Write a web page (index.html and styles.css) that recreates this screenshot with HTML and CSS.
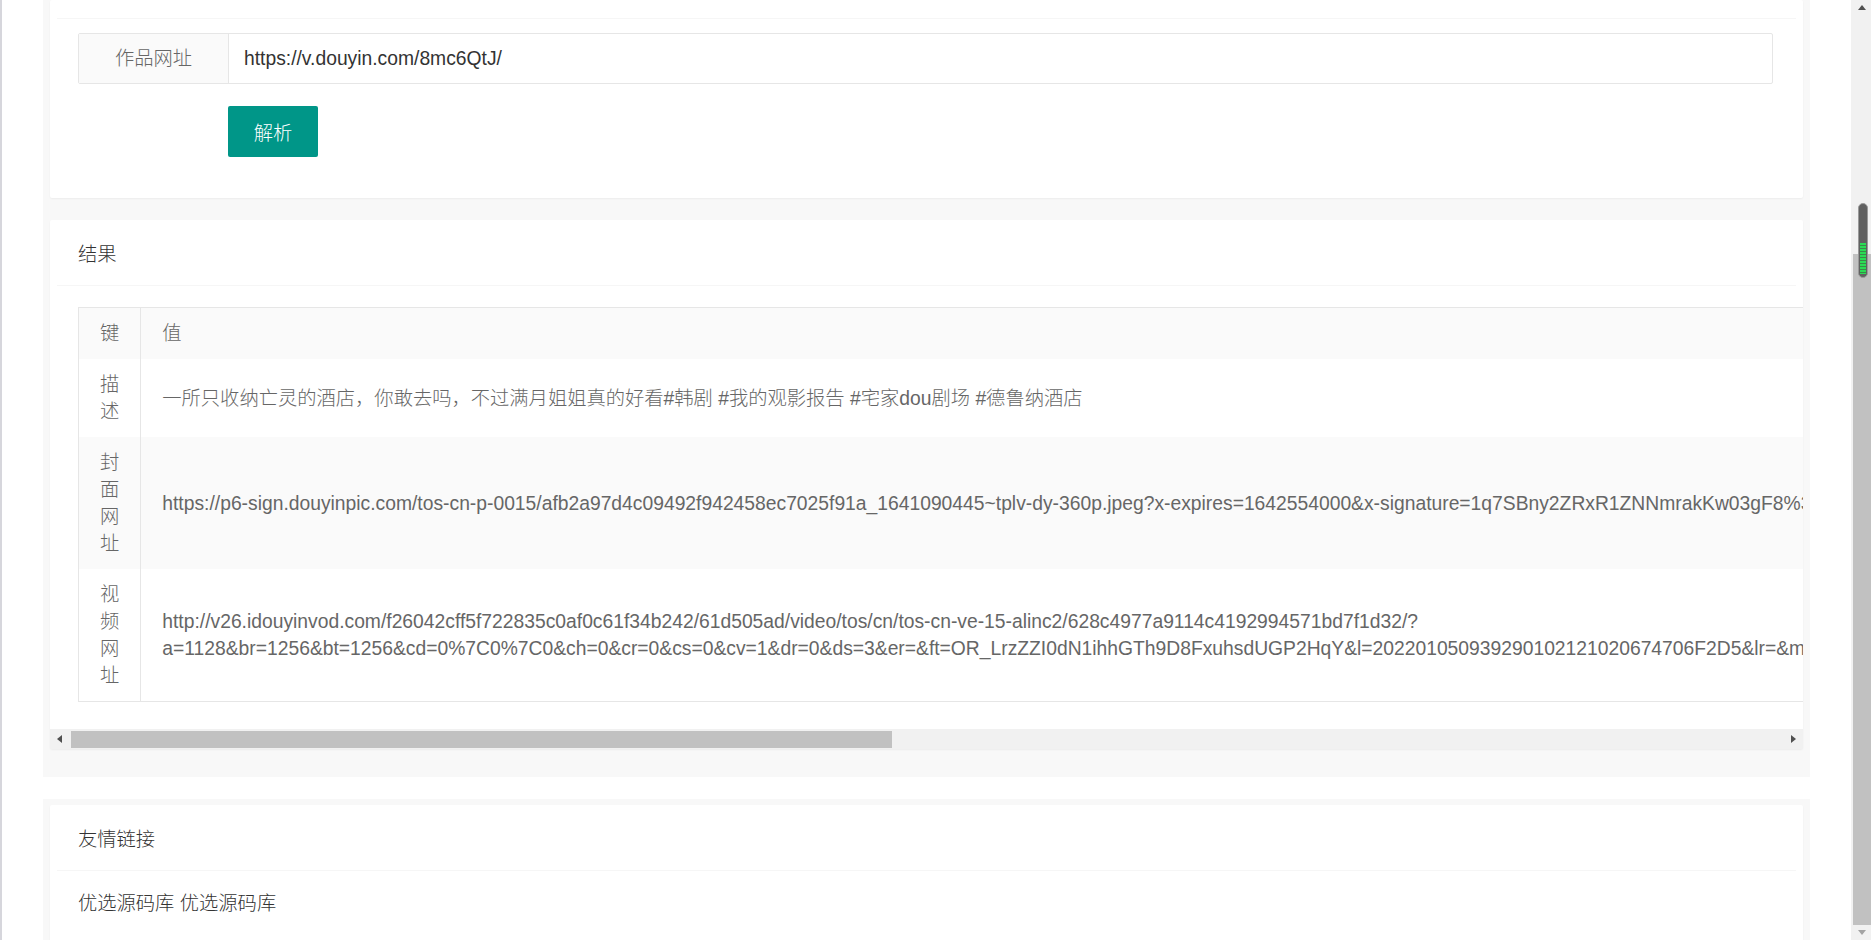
FILE: index.html
```html
<!DOCTYPE html>
<html lang="zh-CN">
<head>
  <meta charset="UTF-8">
  <title>抖音作品解析</title>
  <link rel="stylesheet" href="styles.css">
</head>
<body>

  <div class="edge"></div>

  <div class="page">
    <div class="fluid fluid-main">
      <div class="card">
        <div class="card-header card-header-cut"></div>
        <div class="form-body">
          <div class="form-item">
            <label class="form-label">作品网址</label>
            <input class="form-input" type="text" value="https://v.douyin.com/8mc6QtJ/">
          </div>
          <div class="form-actions">
            <button class="btn">解析</button>
          </div>
        </div>
      </div>

      <div class="card">
        <div class="card-header">结果</div>
        <div class="result-scroll">
          <table class="result-table">
            <thead>
              <tr>
                <th class="key">键</th>
                <th>值</th>
              </tr>
            </thead>
            <tbody>
              <tr>
                <td class="key">描述</td>
                <td>一所只收纳亡灵的酒店，你敢去吗，不过满月姐姐真的好看#韩剧 #我的观影报告 #宅家dou剧场 #德鲁纳酒店</td>
              </tr>
              <tr class="even">
                <td class="key">封面网址</td>
                <td>https://p6-sign.douyinpic.com/tos-cn-p-0015/afb2a97d4c09492f942458ec7025f91a_1641090445~tplv-dy-360p.jpeg?x-expires=1642554000&amp;x-signature=1q7SBny2ZRxR1ZNNmrakKw03gF8%3D&amp;from=4042867744&amp;s=PackSourceEnum_AWEME_DETAIL&amp;se=false&amp;sc=cover&amp;l=202201050939290102121020674706F2D5</td>
              </tr>
              <tr>
                <td class="key">视频网址</td>
                <td>http://v26.idouyinvod.com/f26042cff5f722835c0af0c61f34b242/61d505ad/video/tos/cn/tos-cn-ve-15-alinc2/628c4977a9114c4192994571bd7f1d32/?<wbr>a=1128&amp;br=1256&amp;bt=1256&amp;cd=0%7C0%7C0&amp;ch=0&amp;cr=0&amp;cs=0&amp;cv=1&amp;dr=0&amp;ds=3&amp;er=&amp;ft=OR_LrzZZI0dN1ihhGTh9D8FxuhsdUGP2HqY&amp;l=202201050939290102121020674706F2D5&amp;lr=&amp;mime_type=video_mp4&amp;net=0&amp;pl=0&amp;qs=0&amp;rc=M3Bvcmg6ZnN4OjMzNGkzM0ApZjw2NjY1aTw4N2k0OWVnZ2dfYC9vcjRfLWpgLS1kLS9zc182Mi0wXzBiMTYyMC41LzE6Yw%3D%3D&amp;vl=&amp;vr=</td>
              </tr>
            </tbody>
          </table>
        </div>
        <div class="hbar">
          <span class="hbar-btn hbar-left"></span>
          <div class="hbar-track">
            <div class="hbar-thumb"></div>
          </div>
          <span class="hbar-btn hbar-right"></span>
        </div>
      </div>
    </div>

    <div class="fluid fluid-links">
      <div class="card">
        <div class="card-header">友情链接</div>
        <div class="links-body">
          <a href="#">优选源码库</a> <a href="#">优选源码库</a>
        </div>
      </div>
    </div>
  </div>

  <div class="vscroll">
    <div class="vs-up"></div>
    <div class="vs-track">
      <div class="vs-fill"></div>
    </div>
    <div class="vs-down"></div>
    <div class="vs-thumb">
      <div class="vs-grip"></div>
    </div>
  </div>

</body>
</html>
```

FILE: styles.css
```css
:root {
  --page-bg: #fff;
  --fluid-bg: #f8f8f8;
  --card-bg: #fff;
  --line: #f6f6f6;
  --border: #e6e6e6;
  --stripe: #fafafa;
  --text: #333;
  --muted: #666;
  --green: #009688;
  --bar-bg: #f1f1f1;
  --bar-thumb: #c1c1c1;
}

html, body {
  height: 100%;
}

body {
  margin: 0;
  display: flex;
  height: 100vh;
  overflow: hidden;
  background-color: var(--page-bg);
  font-family: "Liberation Sans", "Noto Sans CJK SC", sans-serif;
  font-size: 19.3px;
  font-weight: 300;
  color: var(--text);
}

.edge {
  width: 2px;
  flex-shrink: 0;
  background-color: #d6d6dc;
}

.page {
  flex: 1;
  min-width: 0;
  padding: 0 41px;
  overflow: hidden;
}

.fluid {
  background-color: var(--fluid-bg);
  padding: 0 7px 28px;
}

.fluid-links {
  margin-top: 22px;
  padding: 6px 7px;
}

.card {
  background-color: var(--card-bg);
  border-radius: 2px;
  box-shadow: 0 1px 2px 0 rgba(0, 0, 0, 0.05);
  margin-bottom: 22px;
}

.card:last-child {
  margin-bottom: 0;
}

.card-header {
  margin: 0 7px;
  padding: 0 21px;
  height: 65px;
  line-height: 70px;
  border-bottom: 1px solid var(--line);
  color: var(--text);
}

.card-header-cut {
  height: 18px;
  line-height: 18px;
}

/* form */

.form-body {
  padding: 14px 30px 41px 28px;
}

.form-item {
  display: flex;
  border: 1px solid var(--border);
  border-radius: 2px;
}

.form-label {
  width: 149px;
  height: 49px;
  line-height: 49px;
  text-align: center;
  background-color: var(--stripe);
  border-right: 1px solid var(--border);
  color: var(--muted);
}

.form-input {
  flex: 1;
  height: 49px;
  border: none;
  outline: none;
  padding: 0 15px;
  font-family: inherit;
  font-size: inherit;
  font-weight: inherit;
  color: var(--text);
  background: transparent;
}

.form-actions {
  margin-top: 22px;
  padding-left: 150px;
}

.btn {
  width: 90px;
  height: 51px;
  border: none;
  border-radius: 2px;
  background-color: var(--green);
  color: #fff;
  font-family: inherit;
  font-size: inherit;
  font-weight: inherit;
  cursor: pointer;
}

/* result table */

.result-scroll {
  overflow: hidden;
  padding: 21px 28px 27px;
}

.result-table {
  border-collapse: collapse;
  border: 1px solid var(--border);
  color: var(--muted);
}

.result-table th,
.result-table td {
  padding: 12px 21px;
  line-height: 27px;
  font-weight: inherit;
  text-align: left;
  vertical-align: middle;
}

.result-table thead tr,
.result-table tr.even {
  background-color: var(--stripe);
}

.result-table .key {
  text-align: center;
  border-right: 1px solid var(--border);
}

/* horizontal scrollbar of the result card */

.hbar {
  display: flex;
  height: 20px;
  background-color: var(--bar-bg);
}

.hbar-btn {
  width: 20px;
  flex-shrink: 0;
  display: flex;
  justify-content: center;
  align-items: center;
}

.hbar-left::before {
  content: "";
  border-top: 4px solid transparent;
  border-bottom: 4px solid transparent;
  border-right: 5px solid #505050;
  margin-left: -2px;
}

.hbar-right::before {
  content: "";
  border-top: 4px solid transparent;
  border-bottom: 4px solid transparent;
  border-left: 5px solid #505050;
  margin-left: 1px;
}

.hbar-track {
  flex: 1;
  padding: 2px 0 1px 1px;
}

.hbar-thumb {
  width: 821px;
  height: 100%;
  background-color: var(--bar-thumb);
}

/* links */

.links-body {
  padding: 17px 28px 30px;
  line-height: 32px;
}

.links-body a {
  color: var(--text);
  text-decoration: none;
}

/* page scrollbar */

.vscroll {
  position: relative;
  width: 20px;
  flex-shrink: 0;
  display: flex;
  flex-direction: column;
  background-color: var(--bar-bg);
}

.vs-up,
.vs-down {
  height: 15px;
  display: flex;
  justify-content: center;
  align-items: center;
}

.vs-up::before {
  content: "";
  border-left: 4.5px solid transparent;
  border-right: 4.5px solid transparent;
  border-bottom: 5px solid #505050;
  margin-left: 1px;
}

.vs-down::before {
  content: "";
  border-left: 4.5px solid transparent;
  border-right: 4.5px solid transparent;
  border-top: 5px solid #a3a3a3;
  margin-left: 1px;
}

.vs-track {
  flex: 1;
  display: flex;
  flex-direction: column;
  padding-top: 239px;
}

.vs-fill {
  flex: 1;
  margin-left: 2px;
  background-color: var(--bar-thumb);
}

.vs-thumb {
  position: absolute;
  top: 203px;
  left: 7px;
  width: 8px;
  height: 70px;
  border: 1px solid #9a9a9a;
  border-radius: 5px;
  background-color: #606060;
  display: flex;
  flex-direction: column;
  justify-content: flex-end;
  padding: 0 0 3px;
}

.vs-grip {
  height: 31px;
  margin: 0 1px;
  background: repeating-linear-gradient(to bottom, #2bdc55 0, #2bdc55 2px, #3a8a4a 2px, #3a8a4a 3px);
}
```
